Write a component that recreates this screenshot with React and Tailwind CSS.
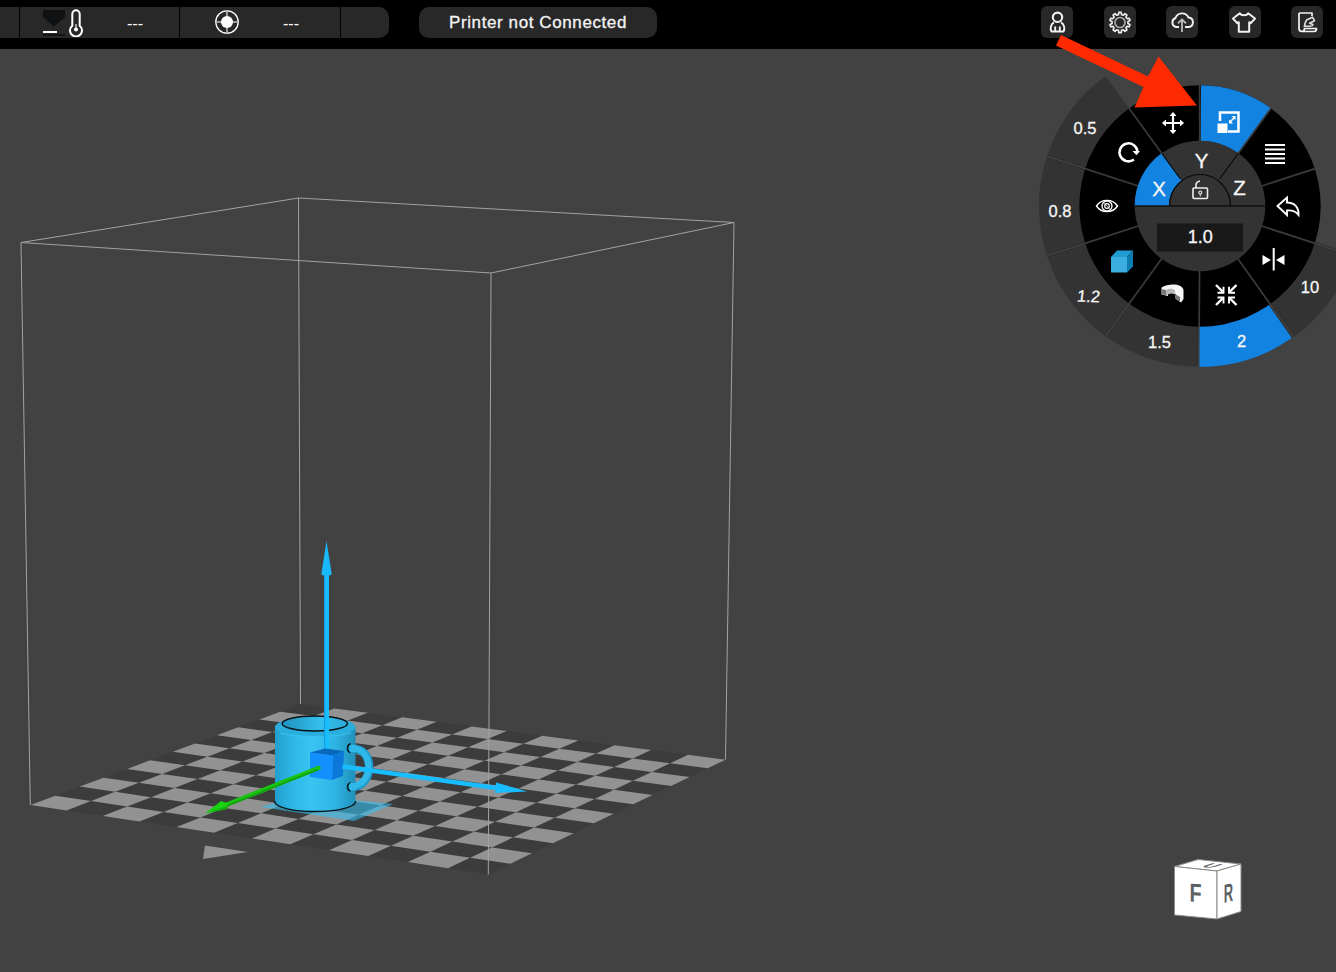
import React from "react";

const SEPARATOR = "#3b3b3b";
const BLUE = "#1383e2";

/* ---------- Geometry ---------- */

const CENTER = [1200, 206];

function polar(r, deg) {
  const a = (deg * Math.PI) / 180;
  return [CENTER[0] + r * Math.cos(a), CENTER[1] - r * Math.sin(a)];
}

function sector(r0, r1, a0, a1) {
  const [x0, y0] = polar(r1, a0);
  const [x1, y1] = polar(r1, a1);
  const [x2, y2] = polar(r0, a1);
  const [x3, y3] = polar(r0, a0);
  return `M${x0} ${y0}A${r1} ${r1} 0 0 0 ${x1} ${y1}L${x2} ${y2}A${r0} ${r0} 0 0 1 ${x3} ${y3}Z`;
}

// Projects the unit square of the build plate on to the screen.
const LEFT = [30.5, 805];
const FRONT = [488.5, 874.3];
const RIGHT = [725.5, 759.7];
const BACK = [300.5, 704];

function project(u, v) {
  const [x0, y0] = LEFT;
  const [x1, y1] = FRONT;
  const [x2, y2] = RIGHT;
  const [x3, y3] = BACK;
  const dx1 = x1 - x2, dx2 = x3 - x2, sx = x0 - x1 + x2 - x3;
  const dy1 = y1 - y2, dy2 = y3 - y2, sy = y0 - y1 + y2 - y3;
  const den = dx1 * dy2 - dx2 * dy1;
  const g = (sx * dy2 - dx2 * sy) / den;
  const h = (dx1 * sy - sx * dy1) / den;
  const w = g * u + h * v + 1;
  return [
    ((x1 - x0 + g * x1) * u + (x3 - x0 + h * x3) * v + x0) / w,
    ((y1 - y0 + g * y1) * u + (y3 - y0 + h * y3) * v + y0) / w,
  ];
}

const CELLS = 12;
const tiles = [];
for (let i = 0; i < CELLS; i++) {
  for (let j = 0; j < CELLS; j++) {
    if ((i + j) % 2 === 0) {
      tiles.push(
        [[i, j], [i + 1, j], [i + 1, j + 1], [i, j + 1]]
          .map(([a, b]) => project(a / CELLS, b / CELLS).map((n) => n.toFixed(2)).join(","))
          .join(" ")
      );
    }
  }
}

/* ---------- Header ---------- */

function Thermometer() {
  return (
    <svg width="40" height="28" viewBox="0 0 40 28" fill="none">
      <path d="M0 1h22v7L11.500 17 10 17 0 8Z" fill="#0f1112" />
      <path d="M0 25h22v2H0Z" fill="#141414" />
      <path d="M0 22h14v2H0Z" fill="#fff" />
      <path d="M29.300 5a3.700 3.700 0 0 1 7.400 0v11.700a6 6 0 1 1-7.400 0Z" stroke="#fff" strokeWidth="2" />
      <path d="M33 15v5" stroke="#ddd" strokeWidth="1.300" />
      <circle cx="33" cy="20.500" r="2" fill="#fff" />
    </svg>
  );
}

function Spool() {
  return (
    <svg width="24" height="24" viewBox="0 0 24 24" fill="none">
      <circle cx="12" cy="12" r="11.200" stroke="#fff" strokeWidth="1.300" />
      <path d="M12 1v22M1 12h22" stroke="#bbb" strokeWidth="1.600" />
      <circle cx="12" cy="12" r="6" fill="#fff" />
    </svg>
  );
}

function IconButton({ children }) {
  return (
    <div className="flex h-8 w-8 items-center justify-center rounded-[6px] bg-[#282828]">
      <svg width="32" height="32" viewBox="0 0 32 32" fill="none" stroke="#f2f2f2" strokeWidth="1.700" strokeLinejoin="round">
        {children}
      </svg>
    </div>
  );
}

const gearPath = (() => {
  const pts = [];
  for (let k = 0; k < 10; k++) {
    [[-11, 8], [-7, 10.2], [7, 10.2], [11, 8]].forEach(([o, r]) => {
      const a = ((k * 36 + o - 90) * Math.PI) / 180;
      pts.push(`${(16 + r * Math.cos(a)).toFixed(2)} ${(16.5 + r * Math.sin(a)).toFixed(2)}`);
    });
  }
  return `M${pts.join("L")}Z`;
})();

function Header() {
  return (
    <header className="flex h-[49px] w-full items-start bg-black pt-[6px] pr-[13px]">
      <div className="mt-px flex h-[31px] w-[389px] shrink-0 gap-px overflow-hidden rounded-r-[10px] text-white">
        <div className="w-[19px] bg-[#282828]" />
        <div className="flex w-[159px] bg-[#282828] pt-[2px] pl-[23px]">
          <Thermometer />
          <span className="ml-[44px] pt-[3px] text-[16px] leading-[24px]">---</span>
        </div>
        <div className="flex w-[160px] bg-[#282828] pt-[3px] pl-[35px]">
          <Spool />
          <span className="ml-[44px] pt-[2px] text-[16px] leading-[24px]">---</span>
        </div>
        <div className="flex-1 bg-[#282828]" />
      </div>
      <div className="mt-px ml-[30px] flex h-[31px] w-[238px] items-center justify-center rounded-[10px] bg-[#282828] text-[17px] tracking-[0.6px] text-[#f4f4f4] [-webkit-text-stroke:0.3px_#f4f4f4]">
        Printer not Connected
      </div>
      <nav className="ml-auto flex gap-[30.5px]">
        <IconButton>
          <circle cx="16.500" cy="11.300" r="4.700" strokeWidth="2.100" />
          <path d="M13 16.300C9.500 18 9 23 10.500 25.500h12C24 23 23.500 18 20 16.300M14.200 20.500v5M18.800 20.500v5" strokeWidth="1.900" />
        </IconButton>
        <IconButton>
          <path d={gearPath} strokeWidth="1.600" />
          <circle cx="16" cy="16.500" r="5" stroke="#aaa" strokeWidth="1.700" />
        </IconButton>
        <IconButton>
          <path d="M13 21h-3a4.700 4.700 0 0 1-.5-9A7 7 0 0 1 22.500 11.500a4.800 4.800 0 0 1 .5 9.500H19" strokeWidth="1.900" />
          <path d="M16 26V13.500M12 17.300l4-4 4 4" stroke="#bbb" strokeWidth="1.800" />
        </IconButton>
        <IconButton>
          <path d="M10.800 7.300c1.500 2.700 6.900 2.700 8.400 0l6.800 5.200-4.200 4.700-1.600-1v9.600H9.800v-9.600l-1.600 1L4 12.500Z" strokeWidth="2" />
        </IconButton>
        <IconButton>
          <path d="M8 7h13v3M8 7v15.500c0 2 1 3 3 3h12c1.500 0 2.500-1 2.500-3H13.500c0 2-1 3-2.500 3" strokeWidth="1.700" />
          <path d="M12.500 20.200h8M14 20c-1-3 1-4 1.500-6l6-2.800 2 3.500-5 2.500 3.500 1.200-1 1.800" stroke="#ddd" strokeWidth="1.600" />
        </IconButton>
      </nav>
    </header>
  );
}

/* ---------- Build volume and model ---------- */

function BuildVolume() {
  return (
    <g fill="none">
      <path d="M30.500 805 488.500 874.300 725.500 759.700 300.500 704Z" fill="#3c3c3c" />
      {tiles.map((points) => (
        <polygon key={points} points={points} fill="#929292" />
      ))}
      <polygon points="205,845.500 248,852 203,859" fill="#929292" />
      <path
        d="M21 242.500 298.500 198 734 222.500 491 273ZM21 242.500 30.300 805M298.500 198 300.500 704M734 222.500 725.500 759.500M491 273 488.300 874.500"
        stroke="#a3a3a3"
        strokeWidth="1"
      />
    </g>
  );
}

function Mug() {
  return (
    <g>
      <polygon points="261,807 300,795 393,804 354,821" fill="#35c0f0" fillOpacity=".6" />
      <path d="M350 748.500C364 748 369.500 757 369 768 368.500 779 362 787.500 350 787" fill="none" stroke="#1f9acb" strokeWidth="8.500" />
      <path d="M350 748C363 747.500 368.800 757 368.300 768 367.800 778.500 361 786.500 350 786" fill="none" stroke="#30b8e9" strokeWidth="6" />
      <path d="M275 728C275 713 355.500 713 355.500 728V801C352 815 278 815 275 801Z" fill="url(#mugBody)" />
      <path d="M275 728C275 713 355.500 713 355.500 728 351 739 280 739 275 728Z" fill="#29aede" />
      <path d="M280 733C295 737.500 336 737.500 351 733" fill="none" stroke="#3ac4f2" strokeWidth="1.500" opacity=".7" />
      <ellipse cx="314.800" cy="723.500" rx="32.700" ry="7.500" fill="url(#mugInside)" stroke="#071317" strokeWidth="1.500" />
      <path d="M274.500 801C275 815 355 815 355.800 801" fill="none" stroke="#071317" strokeWidth="1.300" />
      <path d="M351 744C346.500 744 346.500 752.500 350.500 752.500M351 783C346.500 783 346.500 790.500 350.500 791" fill="none" stroke="#071317" strokeWidth="1.500" />
      <path d="M350 744.700h6v7.500h-6q-2-4 0-7.500ZM350 783h6v7.300h-6q-2-4 0-7.300Z" fill="#2fb7e7" />
    </g>
  );
}

function MoveGizmo() {
  return (
    <g>
      <path d="M324 573h5v177h-5Z" fill="#18bdff" />
      <path d="M324 573h1.200v177H324Z" fill="#159fe0" />
      <path d="M326.500 541 331.800 574.500Q326.500 577 321.300 574.500Z" fill="#18b8fa" />
      <polygon points="310,752.500 333,755.500 332,780 310,777" fill="#148fff" />
      <polygon points="310,752.500 325,748.500 344,751 333,755.500" fill="#0868bd" />
      <polygon points="333,755.500 344,751 343,776 332,780" fill="#0c78da" />
      <path d="M342.500 766.500 500 788.500" stroke="#18bdff" strokeWidth="4.700" />
      <path d="M496 782.500 527 791.500 495 793Z" fill="#18bdff" />
      <path d="M318.500 768 222 806.500" stroke="#18c411" strokeWidth="4.500" strokeLinecap="round" />
      <path d="M318 769.500 223 807.500" stroke="#129c0e" strokeWidth="1.400" />
      <path d="M205 813.500 221 801 228 803.500 227 809Z" fill="#18d20f" />
      <path d="M205 813.500 227 809 228 806Z" fill="#14a80e" />
    </g>
  );
}

/* ---------- Radial tool dial ---------- */

const presets = [
  { label: "0.5", x: 1085, y: 134, from: 126 },
  { label: "0.8", x: 1060, y: 217, from: 162 },
  { label: "1.2", x: 1088, y: 302, from: 198, slanted: true },
  { label: "1.5", x: 1159.5, y: 348, from: 234 },
  { label: "2", x: 1241.5, y: 347, from: 270, active: true },
  { label: "10", x: 1310, y: 293, from: 306 },
];

function ToolIcons() {
  return (
    <g fill="none" stroke="#fff" strokeWidth="2">
      <path d="M1163.500 123h19M1173 113.500v19" strokeWidth="2.200" />
      <path d="m1166 120-3.500 3 3.500 3M1180 120l3.500 3-3.500 3M1170 116l3-3.500 3 3.500M1170 130l3 3.500 3-3.500" fill="#fff" strokeWidth="1" />
      <path d="M1134 159.500A9 9 0 1 1 1137.500 151.500" strokeWidth="2.500" />
      <path d="M1132.500 151h7.500l-3.500 4.200Z" fill="#fff" stroke="none" />
      <path d="M1220 121v-8.500h18.500V131.500H1228" strokeWidth="2.500" />
      <path d="M1217.500 123.500h10v9.500h-10Z" fill="#fff" stroke="none" />
      <path d="m1230 122 4.500-4.500" strokeWidth="1.600" />
      <path d="M1229 119.500v4h4ZM1235.500 116v4l-4-4Z" fill="#fff" stroke="none" />
      <path d="M1265 145h20M1265 149.500h20M1265 154h20M1265 158.500h20M1265 163h20" strokeWidth="2.200" />
      <path d="M1277.500 206 1287 197.500v5c7.500 0 12 5 11.500 12.500-3-4-6-5-11.500-4.500v4.500Z" strokeWidth="1.900" />
      <path d="M1273.700 248v22.500" strokeWidth="2" />
      <path d="m1262.500 255 8.500 5-8.500 5ZM1284.500 255l-8.500 5 8.500 5Z" fill="#fff" stroke="none" />
      <path d="m1216 285 6.500 6.500M1236.500 285l-6.500 6.500M1216 305l6.500-6.500M1236.500 305l-6.500-6.500" strokeWidth="2.400" />
      <path d="M1217.500 292.700h6v-6M1235 292.700h-6v-6M1217.500 297.500h6v6M1235 297.500h-6v6" strokeWidth="1.900" />
      <path d="M1096.500 206c5-7.500 16-7.500 21 0-5 7.500-16 7.500-21 0Z" strokeWidth="1.400" />
      <circle cx="1107" cy="206" r="5" strokeWidth="1.300" />
      <circle cx="1107" cy="206" r="2.300" strokeWidth="1.200" />
      <path d="M1104 202.500l6 7" strokeWidth=".7" />
      <g stroke="none">
        <path d="M1111 257h16v15.500h-16Z" fill="#3badde" />
        <path d="m1111 257 6-6.500h16l-6 6.500Z" fill="#209bd2" />
        <path d="m1127 257 6-6.500v16l-6 6Z" fill="#0b7db3" />
        <path d="M1161.500 287.500C1168 283.500 1182 283 1183.500 290v9l-2.500 3.500-5-3.500v-5l-5-1-3 1v2l-6.500-1.500Z" fill="#f5f5f5" />
        <path d="m1161.500 289 4.500 1v5.500l-4.500-1.500ZM1175 294l5 3v5l-5-3.500Z" fill="#777" />
        <path d="M1166 290c3-2 8-1.500 9 .5v4c-2-1.500-5-1.500-7 0l-2 1Z" fill="#b8b8b8" />
      </g>
    </g>
  );
}

function Dial() {
  return (
    <g>
      {presets.map((p) => (
        <path key={p.label} d={sector(119, 160.8, p.from, p.from + 36)} fill="#333" />
      ))}
      {[162, 198, 234, 269.5, 305.5, 342].map((a) => {
        const [x1, y1] = polar(120, a);
        const [x2, y2] = polar(161, a);
        return (
          <g key={a}>
            <line x1={x1} y1={y1} x2={x2} y2={y2} stroke="#292929" strokeWidth="2.600" />
            <line x1={x1} y1={y1} x2={x2} y2={y2} stroke="#444" strokeWidth="1.400" />
          </g>
        );
      })}
      <path d={sector(119, 160.8, 269.8, 304.8)} fill={BLUE} />
      <circle cx="1200" cy="206" r="120.700" fill="#000" />
      <path d={sector(65, 120.7, 54, 89.5)} fill={BLUE} />
      {[18, 54, 90.2, 126, 162, 198, 234, 269.6, 305.6, 342].map((a) => {
        const [x1, y1] = polar(64, a);
        const [x2, y2] = polar(121, a);
        return <line key={a} x1={x1} y1={y1} x2={x2} y2={y2} stroke={SEPARATOR} strokeWidth="1.700" />;
      })}
      <circle cx="1200" cy="206" r="65.300" fill="#333" />
      <path d={sector(31, 65.3, 126, 180)} fill={BLUE} />
      <path d="M1180.500 179 1161.800 153.500M1219.500 179 1238.200 153.500" stroke="#080808" strokeWidth="1.200" />
      <path d="M1169.500 206a30.500 31.500 0 0 1 61 0" fill="#333" stroke="#080808" strokeWidth="1.200" />
      <path d="M1135 206h130" stroke="#111" strokeWidth="1.400" />
      <path d="M1157 223.500h86v28h-86Z" fill="#191919" />
      <g fill="none" stroke="#eee" strokeWidth="1.600">
        <rect x="1193" y="188" width="14.500" height="10.500" rx="1" />
        <path d="M1196 188v-3c0-2.500 1.500-3.500 4-4" />
        <circle cx="1200.300" cy="192.500" r="1.500" strokeWidth="1.100" />
        <path d="M1200.300 194v2.300" strokeWidth="1.100" />
      </g>
      <ToolIcons />
      <g fill="#f6f6f6" stroke="#f6f6f6" strokeWidth=".3" textAnchor="middle" fontSize="16.500">
        {presets.map((p) => (
          <text key={p.label} transform={`matrix(1 ${p.slanted ? 0.04 : 0} ${p.slanted ? -0.12 : 0} 1 ${p.x} ${p.y})`}>
            {p.label}
          </text>
        ))}
        <text x="1200.300" y="243" fontSize="18">1.0</text>
        <text x="1159" y="195.500" fontSize="20.500">X</text>
        <text x="1201.500" y="168" fontSize="20.500">Y</text>
        <text x="1239.500" y="195" fontSize="20.500">Z</text>
      </g>
    </g>
  );
}

function ViewCube() {
  return (
    <g>
      <g fill="#fff" stroke="#8a8a8a" strokeWidth="1">
        <polygon points="1174.500,866.500 1198,859.500 1241,864 1217,871" />
        <polygon points="1174.500,866.500 1217,871 1217,919 1174.500,915" />
        <polygon points="1217,871 1241,864 1241,911.500 1217,919" />
      </g>
      <g fill="#5d6165" fontWeight="bold" textAnchor="middle">
        <text transform="matrix(.76 .05 0 1 1195.500 902)" fontSize="26">F</text>
        <text transform="matrix(.5 -.12 0 1 1228.500 902)" fontSize="26">R</text>
        <text transform="matrix(.95 .1 -.9 .3 1206.500 867.500)" fontSize="18">U</text>
      </g>
    </g>
  );
}

export default function App() {
  return (
    <div className="relative flex h-[972px] w-[1336px] flex-col overflow-hidden bg-[#424242] font-['Liberation_Sans',Arial,sans-serif]">
      <Header />
      <main className="flex-1">
        <svg className="block" width="1336" height="923" viewBox="0 49 1336 923">
          <defs>
            <linearGradient id="mugBody">
              <stop offset="0" stopColor="#219fce" />
              <stop offset=".2" stopColor="#2db5e5" />
              <stop offset=".45" stopColor="#39c4f2" />
              <stop offset=".75" stopColor="#2fb4e3" />
              <stop offset="1" stopColor="#1f8fb9" />
            </linearGradient>
            <linearGradient id="mugInside">
              <stop offset="0" stopColor="#1f91bb" />
              <stop offset=".6" stopColor="#36c0ee" />
              <stop offset="1" stopColor="#2aa9d7" />
            </linearGradient>
          </defs>
          <BuildVolume />
          <Mug />
          <MoveGizmo />
          <Dial />
          <ViewCube />
        </svg>
      </main>
      <svg className="absolute top-[30px] left-[1050px]" width="150" height="80" viewBox="1050 30 150 80">
        <polygon points="1061,35 1148,76.500 1158.500,56.500 1197,105.500 1134.500,107.500 1143.500,87 1056,45.500" fill="#ff2a00" />
      </svg>
    </div>
  );
}
